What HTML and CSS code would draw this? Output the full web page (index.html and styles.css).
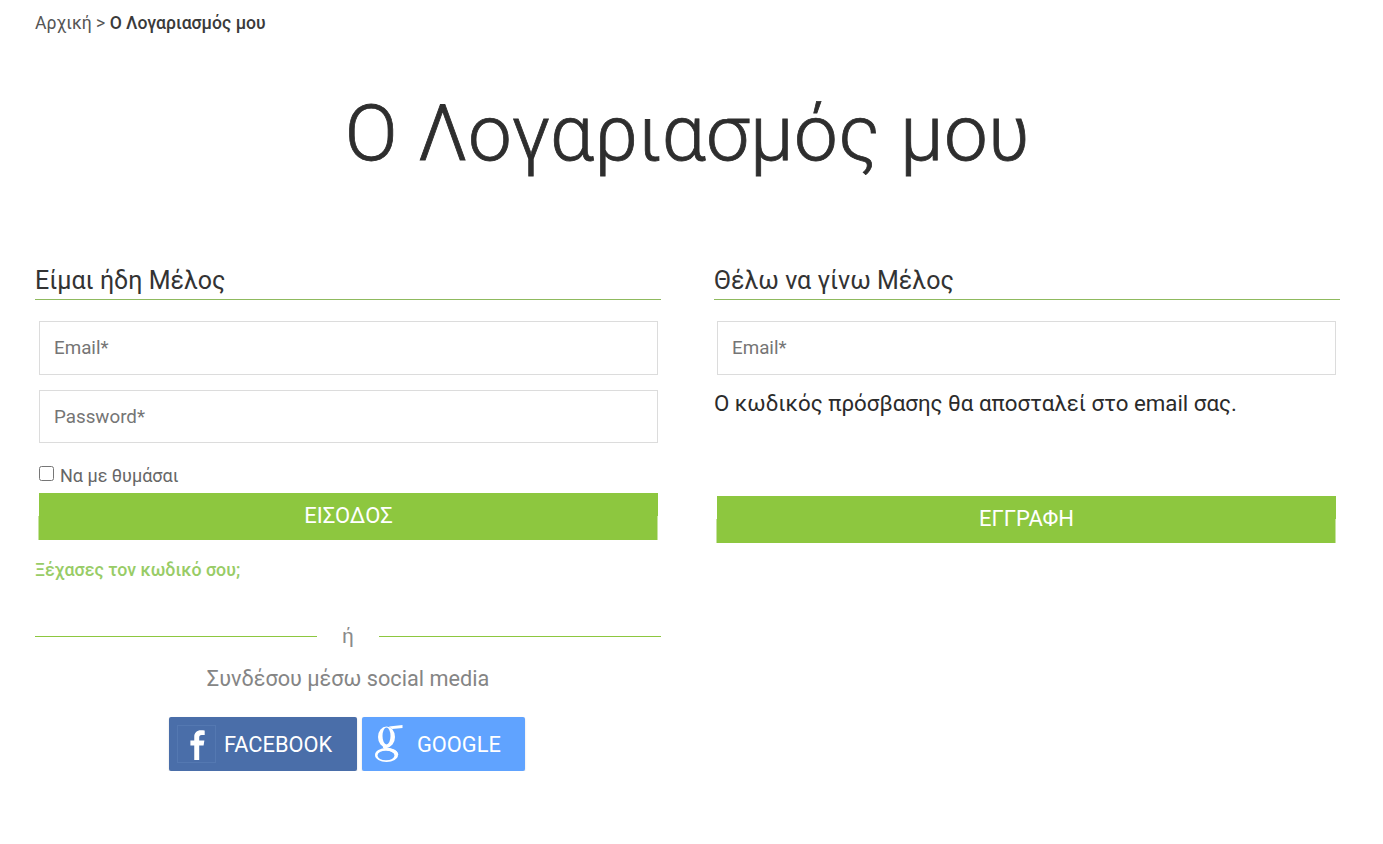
FILE: index.html
```html
<!DOCTYPE html>
<html lang="el">
<head>
    <meta charset="UTF-8">
    <meta name="viewport" content="width=device-width, initial-scale=1.0">
    <title>Ο Λογαριασμός μου</title>
    <link rel="stylesheet" href="styles.css">
</head>
<body>
<div class="container">
    <div class="breadcrumb">Αρχική &gt; <strong>Ο Λογαριασμός μου</strong></div>
    <h1>Ο Λογαριασμός μου</h1>

    <div class="columns">
        <div class="column">
            <h2>Είμαι ήδη Μέλος</h2>
            <form class="form">
                <input class="field" type="text" placeholder="Email*">
                <input class="field field-second" type="password" placeholder="Password*">
                <label class="remember"><input type="checkbox"> Να με θυμάσαι</label>
                <button class="submit" type="button">ΕΙΣΟΔΟΣ</button>
            </form>
            <a class="forgot" href="#">Ξέχασες τον κωδικό σου;</a>
            <div class="divider"><span>ή</span></div>
            <div class="social-title">Συνδέσου μέσω social media</div>
            <div class="social">
                <a class="social-button facebook" href="#">
                    <span class="social-icon">
                        <svg width="20" height="33" viewBox="0 0 18 30"><path d="M11 29V16h4l.7-4.6H11V8.6c0-1.4.5-2.300 2.300-2.300H16V2.200C15.400 2.100 14 2 12.500 2 9 2 6.500 4.100 6.500 8v3.400H3V16h3.500v13z" fill="#ffffff"/></svg>
                    </span>
                    FACEBOOK
                </a>
                <a class="social-button google" href="#">
                    <svg class="google-icon" width="30" height="42" viewBox="0 0 30 42">
                        <path fill="#ffffff" fill-rule="evenodd" d="M4 15a8.5 10.5 0 1 0 17 0a8.5 10.5 0 1 0-17 0zM8.500 14a4 8.500 0 1 0 8 0a4 8.500 0 1 0-8 0z"/>
                        <path fill="#ffffff" d="M15 4.500L28.500 3v3L18 7z"/>
                        <path fill="none" stroke="#ffffff" stroke-width="3" d="M10.500 24C9.500 26.500 15 27 18.500 28.500C21 29.500 22.500 31 23 33"/>
                        <path fill="#ffffff" fill-rule="evenodd" d="M1 33a11.500 7 0 1 0 23 0a11.500 7 0 1 0-23 0zM3.500 33.500a8.500 4.800 0 1 0 17 0a8.500 4.800 0 1 0-17 0z"/>
                    </svg>
                    GOOGLE
                </a>
            </div>
        </div>

        <div class="column">
            <h2>Θέλω να γίνω Μέλος</h2>
            <form class="form form-register">
                <input class="field" type="text" placeholder="Email*">
                <p class="note">Ο κωδικός πρόσβασης θα αποσταλεί στο email σας.</p>
                <button class="submit submit-register" type="button">ΕΓΓΡΑΦΗ</button>
            </form>
        </div>
    </div>
</div>
</body>
</html>
```

FILE: styles.css
```css
body {
    margin: 0;
    background-color: #ffffff;
    color: #2e2e2e;
    font-family: "Roboto", "Liberation Sans", sans-serif;
}

.container {
    padding: 13px 43px 0 35px;
}

.breadcrumb {
    font-size: 17.6px;
    line-height: 20px;
    color: #555555;
}

.breadcrumb strong {
    font-weight: 500;
    color: #3a3a3a;
}

h1 {
    margin: 54px 0 0;
    text-align: center;
    font-weight: 300;
    font-size: 78px;
    line-height: 94px;
    letter-spacing: 0.5px;
    color: #2e2e2e;
    -webkit-text-stroke: 0.8px #2e2e2e;
}

.columns {
    display: grid;
    grid-template-columns: 626px 626px;
    gap: 53px;
    margin-top: 85px;
}

h2 {
    margin: 0;
    height: 33px;
    font-size: 25px;
    font-weight: 400;
    line-height: 29px;
    color: #333333;
    border-bottom: 1px solid #8fba5e;
}

.form {
    display: flex;
    flex-direction: column;
    padding: 21px 3px 0 4px;
}

.form-register {
    padding: 21px 4px 0 3px;
}

.field {
    box-sizing: border-box;
    height: 54px;
    padding: 0 14px;
    border: 1px solid #dcdcdc;
    background-color: #ffffff;
    font-family: "Roboto", "Liberation Sans", sans-serif;
    font-size: 18.8px;
    color: #555555;
    outline: none;
}

.field::placeholder {
    color: #757575;
}

.field-second {
    margin-top: 15px;
    height: 53px;
}

.remember {
    display: flex;
    align-items: center;
    gap: 6px;
    margin-top: 21px;
    height: 22px;
    font-size: 18px;
    color: #666666;
}

.remember input {
    margin: 0;
    width: 15px;
    height: 15px;
    position: relative;
    top: -2px;
}

.submit {
    position: relative;
    height: 47px;
    margin-top: 7px;
    padding: 0 0 3px;
    border: none;
    background-color: #8dc73f;
    color: #ffffff;
    font-family: "Roboto", "Liberation Sans", sans-serif;
    font-size: 22px;
    cursor: pointer;
}

/* the lower half of the button sits a hair to the left */
.submit::before,
.submit::after {
    content: "";
    position: absolute;
    bottom: 0;
    width: 1px;
    height: 24px;
    background-color: #c6e39f;
}

.submit::before {
    left: -1px;
}

.submit::after {
    right: 0;
}

.note {
    margin: 14px 0 0 -3px;
    font-size: 22.3px;
    line-height: 28px;
    color: #2b2b2b;
}

.submit-register {
    margin-top: 79px;
}

.forgot {
    display: block;
    margin-top: 20px;
    font-size: 17.8px;
    font-weight: 500;
    line-height: 20px;
    color: #98cc66;
    text-decoration: none;
}

.divider {
    display: flex;
    align-items: center;
    margin-top: 45px;
    height: 22px;
    gap: 25px;
    font-size: 21px;
    color: #8a8a8a;
}

.divider::before,
.divider::after {
    content: "";
    flex: 1;
    border-top: 1px solid #8dc73f;
}

.social-title {
    margin-top: 19px;
    text-align: center;
    font-size: 21.7px;
    line-height: 26px;
    color: #858585;
}

.social {
    display: flex;
    justify-content: center;
    gap: 5px;
    margin-top: 25px;
    padding-right: 2px;
}

.social-button {
    display: flex;
    align-items: center;
    box-sizing: border-box;
    height: 54px;
    border-radius: 2px;
    color: #ffffff;
    font-size: 21.8px;
    text-decoration: none;
    box-shadow: 0 1px 2px rgba(0, 0, 0, 0.15);
}

.facebook {
    width: 188px;
    padding-left: 8px;
    gap: 8px;
    background-color: #4a6ea9;
}

.google {
    width: 163px;
    padding-left: 12px;
    gap: 13px;
    background-color: #60a3ff;
}

.social-icon {
    display: flex;
    align-items: center;
    justify-content: center;
    width: 39px;
    height: 38px;
    box-sizing: border-box;
    border: 1px solid #5478b1;
}

.google-icon {
    flex: none;
    margin-top: -2px;
}
```
